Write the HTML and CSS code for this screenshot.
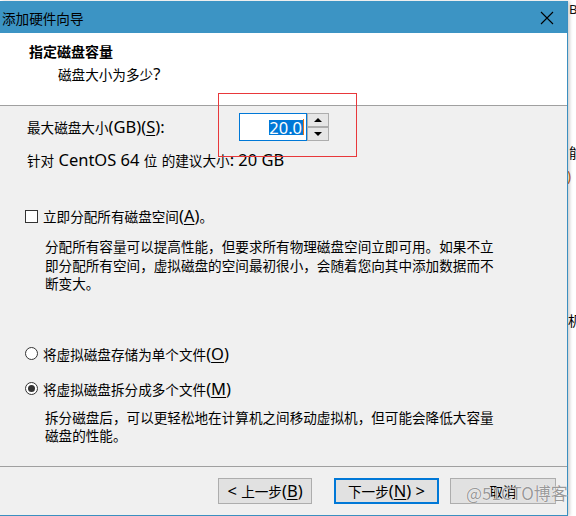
FILE: index.html
```html
<!DOCTYPE html>
<html>
<head>
<meta charset="utf-8">
<title>添加硬件向导</title>
<link rel="stylesheet" href="styles.css">
</head>
<body>
<div class="screen">
  <div class="dialog">
    <div class="titlebar">
      <span class="title">添加硬件向导</span>
      <svg class="close" width="14" height="14" viewBox="0 0 14 14"><path d="M1 1L13 13M13 1L1 13" stroke="#000" stroke-width="1.1" fill="none"/></svg>
    </div>
    <div class="header">
      <div class="h-title">指定磁盘容量</div>
      <div class="h-sub">磁盘大小为多少<span class="lat">?</span></div>
    </div>
    <div class="content">
      <div class="size-row">
        <span class="size-label">最大磁盘大小<span class="lat">(GB)(<u>S</u>):</span></span>
        <div class="spin">
          <div class="spin-input"><span class="sel lat">20.0</span><span class="caret"></span></div>
          <div class="spin-btns">
            <div class="spin-btn"><svg width="8" height="4" viewBox="0 0 8 4"><polygon points="0,4 8,4 4,0" fill="#000"/></svg></div>
            <div class="spin-btn"><svg width="8" height="4" viewBox="0 0 8 4"><polygon points="0,0 8,0 4,4" fill="#000"/></svg></div>
          </div>
        </div>
        <div class="annot"></div>
      </div>
      <div class="hint">针对<span class="lat"> CentOS 64 </span>位<span class="lat"> </span>的建议大小<span class="lat">: 20 GB</span></div>

      <div class="opt-row check-row">
        <span class="checkbox"></span>
        <span>立即分配所有磁盘空间<span class="lat">(<u>A</u>)</span>。</span>
      </div>
      <p class="desc">分配所有容量可以提高性能，但要求所有物理磁盘空间立即可用。如果不立<br>即分配所有空间，虚拟磁盘的空间最初很小，会随着您向其中添加数据而不<br>断变大。</p>

      <div class="opt-row radio-row first">
        <span class="radio"></span>
        <span>将虚拟磁盘存储为单个文件<span class="lat">(<u>O</u>)</span></span>
      </div>
      <div class="opt-row radio-row second">
        <span class="radio checked"></span>
        <span>将虚拟磁盘拆分成多个文件<span class="lat">(<u>M</u>)</span></span>
      </div>
      <p class="desc desc2">拆分磁盘后，可以更轻松地在计算机之间移动虚拟机，但可能会降低大容量<br>磁盘的性能。</p>
    </div>
    <div class="footer">
      <button class="btn btn-back"><span class="lat">&lt;&nbsp;</span>上一步<span class="lat">(<u>B</u>)</span></button>
      <button class="btn btn-next">下一步<span class="lat">(<u>N</u>)&nbsp;&gt;</span></button>
      <button class="btn btn-cancel">取消</button>
      <span class="watermark">@51CTO博客</span>
    </div>
  </div>
  <div class="backdrop">
    <span class="frag frag-b">B</span>
    <span class="frag frag-n">能</span>
    <span class="frag frag-p">)</span>
    <span class="frag frag-j">机</span>
  </div>
</div>
</body>
</html>
```

FILE: styles.css
```css
* { box-sizing: border-box; }

body {
  margin: 0;
  width: 576px;
  height: 516px;
  overflow: hidden;
  background: #ffffff;
  font-family: "Noto Sans CJK SC", "Noto Sans", sans-serif;
  font-size: 13.6px;
  color: #000;
}

.lat {
  font-family: "Noto Sans", "Noto Sans CJK SC", sans-serif;
  font-size: 16.5px;
}

u { text-decoration: underline; text-underline-offset: 2px; }

.screen {
  display: flex;
  width: 576px;
  height: 516px;
}

.dialog {
  width: 568px;
  flex: none;
  margin-top: 1px;
  height: 515px;
  display: flex;
  flex-direction: column;
  border-right: 1px solid #3b8fc0;
  border-bottom: 1px solid #3b8fc0;
  box-shadow: 2px 0 3px rgba(0,0,0,0.18);
  position: relative;
  z-index: 1;
}

.titlebar {
  height: 32px;
  background: #3c94c4;
  display: flex;
  align-items: center;
  justify-content: space-between;
  padding: 0 13px 0 2px;
  flex: none;
}

.title {
  font-size: 13.6px;
  line-height: 18px;
  margin-top: 1px;
}

.close { display: block; margin-top: 1px; }

.header {
  height: 73px;
  background: #fff;
  border-bottom: 1px solid #a0a0a0;
  padding-top: 9px;
  flex: none;
}

.h-title {
  font-weight: bold;
  font-size: 14px;
  line-height: 18px;
  padding-left: 29px;
}

.h-sub {
  line-height: 18px;
  padding-left: 58px;
  margin-top: 5px;
}

.content {
  height: 360px;
  background: #f0f0f0;
  flex: none;
  position: relative;
  overflow: visible;
}

.size-row {
  display: flex;
  align-items: center;
  height: 28px;
  margin-top: 7px;
  padding-left: 27px;
  position: relative;
}

.size-label {
  width: 212px;
  line-height: 18px;
}

.spin {
  display: flex;
  height: 28px;
}

.spin-input {
  width: 68px;
  height: 28px;
  background: #fff;
  border: 1px solid #0078d7;
  display: flex;
  align-items: center;
  justify-content: flex-end;
  padding-right: 2px;
}

.sel {
  background: #0078d7;
  color: #fff;
  line-height: 15px;
  height: 15px;
  display: inline-block;
  padding: 0 1px 0 0;
}

.caret {
  width: 1px;
  height: 16px;
  background: #e0731c;
}

.spin-btns {
  width: 22px;
  display: flex;
  flex-direction: column;
  justify-content: space-between;
}

.spin-btn {
  height: 14px;
  background: #e6e6e6;
  border: 1px solid #adadad;
  display: flex;
  align-items: center;
  justify-content: center;
}

.spin-btn svg { display: block; }

.annot {
  position: absolute;
  left: 218px;
  top: -20px;
  width: 139px;
  height: 64px;
  border: 1px solid #e8383b;
  pointer-events: none;
}

.hint {
  margin-top: 10px;
  line-height: 18px;
  padding-left: 27px;
}

.opt-row {
  display: flex;
  align-items: center;
  height: 18px;
  padding-left: 25px;
  line-height: 18px;
}

.check-row { margin-top: 38px; }

.checkbox {
  width: 13px;
  height: 13px;
  border: 1px solid #333;
  background: #fff;
  margin-right: 5px;
  flex: none;
}

.radio {
  width: 13px;
  height: 13px;
  border: 1px solid #333;
  border-radius: 50%;
  background: #fff;
  margin-right: 5px;
  flex: none;
  display: flex;
  align-items: center;
  justify-content: center;
}

.radio.checked::after {
  content: "";
  width: 7px;
  height: 7px;
  border-radius: 50%;
  background: #333;
}

.desc {
  margin: 12px 0 0;
  padding-left: 45px;
  line-height: 18.5px;
  white-space: nowrap;
}

.radio-row.first { margin-top: 52px; }
.radio-row.second { margin-top: 17px; }

.desc2 {
  margin-top: 10px;
  line-height: 18px;
}

.footer {
  flex: 1;
  background: #f0f0f0;
  border-top: 1px solid #a0a0a0;
  display: flex;
  align-items: flex-start;
  padding-top: 11px;
  padding-left: 218px;
  position: relative;
}

.btn {
  height: 26px;
  background: #e1e1e1;
  border: 1px solid #adadad;
  font: inherit;
  color: #000;
  padding: 0;
  display: flex;
  align-items: center;
  justify-content: center;
  line-height: 18px;
}

.btn-back { width: 94px; }
.btn-next { width: 105px; margin-left: 22px; border: 2px solid #0078d7; }
.btn-cancel { width: 106px; margin-left: 11px; }

.watermark {
  position: absolute;
  left: 466px;
  top: 15px;
  font-family: "Noto Sans CJK SC", sans-serif;
  font-size: 17px;
  line-height: 22px;
  color: #999999;
  text-shadow: 0 0 1px #fff, 0 0 1px #fff;
  white-space: nowrap;
  z-index: 2;
}

.backdrop {
  flex: 1;
  display: flex;
  flex-direction: column;
  overflow: hidden;
  background: #fff;
  padding-left: 1px;
}

.frag {
  display: block;
  line-height: 14px;
  white-space: nowrap;
}

.frag-b { margin-top: 2px; font-family: "Noto Sans", sans-serif; font-size: 13px; color: #111; }
.frag-n { margin-top: 129px; font-size: 13.6px; }
.frag-p { margin-top: 10px; font-family: "Noto Sans", sans-serif; color: #c06010; margin-left: -2px; }
.frag-j { margin-top: 130px; font-size: 13.6px; margin-left: -1px; }
```
